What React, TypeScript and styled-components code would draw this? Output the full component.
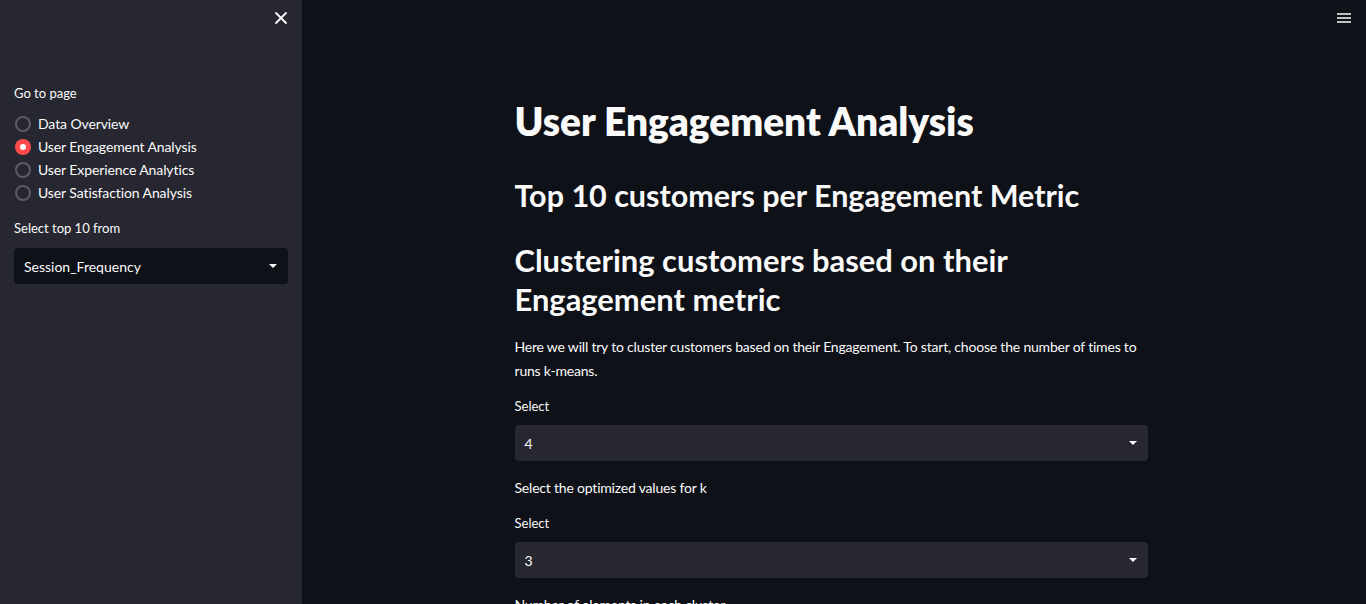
import styled, { createGlobalStyle } from "styled-components";

const GlobalStyle = createGlobalStyle`
  html, body {
    margin: 0;
    padding: 0;
    background: #0e1117;
    font-family: Lato, "Open Sans", sans-serif;
    color: #fafafa;
  }
`;

const Page = styled.div`
  display: flex;
  height: 604px;
  overflow: hidden;
`;

const Sidebar = styled.aside`
  width: 302px;
  flex-shrink: 0;
  background: #262730;
  display: flex;
  flex-direction: column;
  padding: 0 14px;
  box-sizing: border-box;
`;

const SidebarTop = styled.div`
  display: flex;
  justify-content: flex-end;
  height: 84px;
  padding-top: 10px;
  box-sizing: border-box;
`;

const IconButton = styled.button<{ $right?: number }>`
  width: 16px;
  height: 16px;
  padding: 0;
  border: none;
  background: transparent;
  color: #fafafa;
  display: flex;
  align-items: center;
  justify-content: center;
  cursor: pointer;
  margin-right: ${(p) => p.$right ?? 0}px;
`;

const WidgetLabel = styled.div`
  font-size: 13px;
  line-height: 18px;
  color: #fafafa;
  margin-bottom: 6px;
`;

const RadioList = styled.div`
  display: flex;
  flex-direction: column;
  margin-top: 4px;
  margin-bottom: 15px;
`;

const RadioRow = styled.label`
  display: flex;
  align-items: center;
  height: 23px;
  gap: 7px;
  font-size: 14px;
  letter-spacing: -0.1px;
  color: #fafafa;
`;

const RadioDot = styled.span<{ $checked?: boolean }>`
  width: 16px;
  height: 16px;
  border-radius: 50%;
  box-sizing: border-box;
  margin-left: 1px;
  border: ${(p) => (p.$checked ? "none" : "2px solid #5b5c66")};
  background: ${(p) => (p.$checked ? "#ff4b4b" : "transparent")};
  display: flex;
  align-items: center;
  justify-content: center;
  &::after {
    content: "";
    display: ${(p) => (p.$checked ? "block" : "none")};
    width: 6px;
    height: 6px;
    border-radius: 50%;
    background: #fff;
  }
`;

const SelectBox = styled.div<{ $dark?: boolean }>`
  height: 36px;
  border-radius: 4px;
  background: ${(p) => (p.$dark ? "#0e1117" : "#262730")};
  display: flex;
  align-items: center;
  justify-content: space-between;
  padding: 0 10px;
  font-size: 14px;
  color: #fafafa;
  box-sizing: border-box;
  margin-top: ${(p) => (p.$dark ? 5 : 10)}px;
`;

const Caret = styled.span`
  width: 0;
  height: 0;
  border-left: 4px solid transparent;
  border-right: 4px solid transparent;
  border-top: 4px solid #fafafa;
  margin-right: 1px;
`;

const Main = styled.main`
  flex: 1;
  position: relative;
  display: flex;
  justify-content: center;
`;

const MenuCorner = styled.div`
  position: absolute;
  top: 10px;
  right: 14px;
`;

const Content = styled.div`
  width: 633px;
  padding-top: 95px;
  margin-left: -6px;
`;

const H1 = styled.h1`
  margin: 0 0 27px;
  font-size: 38.8px;
  line-height: 52px;
  font-weight: 800;
`;

const H2 = styled.h2`
  margin: 0 0 25px;
  font-size: 30.5px;
  line-height: 42px;
  font-weight: 700;
`;

const H3 = styled.h3`
  margin: 0 0 16px;
  font-size: 30.9px;
  line-height: 39px;
  font-weight: 700;
`;

const Para = styled.p`
  margin: 0 0 14px;
  font-size: 14px;
  letter-spacing: -0.2px;
  line-height: 24px;
`;

const Field = styled.div`
  margin-bottom: 15px;
`;

const Select = ({ value, dark }: { value: string; dark?: boolean }) => (
  <SelectBox $dark={dark}>
    <span>{value}</span>
    <Caret />
  </SelectBox>
);

const pages = [
  "Data Overview",
  "User Engagement Analysis",
  "User Experience Analytics",
  "User Satisfaction Analysis",
];

export default function App() {
  return (
    <>
      <GlobalStyle />
      <Page>
        <Sidebar>
          <SidebarTop>
            <IconButton $right={-1}>
              <svg width="14" height="14" viewBox="0 0 14 14">
                <path d="M2 2L12 12M12 2L2 12" stroke="#fafafa" strokeWidth="1.8" strokeLinecap="round" />
              </svg>
            </IconButton>
          </SidebarTop>
          <WidgetLabel>Go to page</WidgetLabel>
          <RadioList>
            {pages.map((p, i) => (
              <RadioRow key={p}>
                <RadioDot $checked={i === 1} />
                {p}
              </RadioRow>
            ))}
          </RadioList>
          <WidgetLabel>Select top 10 from</WidgetLabel>
          <Select value="Session_Frequency" dark />
        </Sidebar>
        <Main>
          <MenuCorner>
            <IconButton>
              <svg width="16" height="14" viewBox="0 0 16 14">
                <path d="M1 3H15M1 7H15M1 11H15" stroke="#fafafa" strokeWidth="1.6" />
              </svg>
            </IconButton>
          </MenuCorner>
          <Content>
            <H1>User Engagement Analysis</H1>
            <H2>Top 10 customers per Engagement Metric</H2>
            <H3>
              Clustering customers based on their
              <br />
              Engagement metric
            </H3>
            <Para>
              Here we will try to cluster customers based on their Engagement. To start, choose the
              number of times to runs k-means.
            </Para>
            <Field>
              <WidgetLabel>Select</WidgetLabel>
              <Select value="4" />
            </Field>
            <Para>Select the optimized values for k</Para>
            <Field>
              <WidgetLabel>Select</WidgetLabel>
              <Select value="3" />
            </Field>
            <Para>Number of elements in each cluster</Para>
          </Content>
        </Main>
      </Page>
    </>
  );
}
